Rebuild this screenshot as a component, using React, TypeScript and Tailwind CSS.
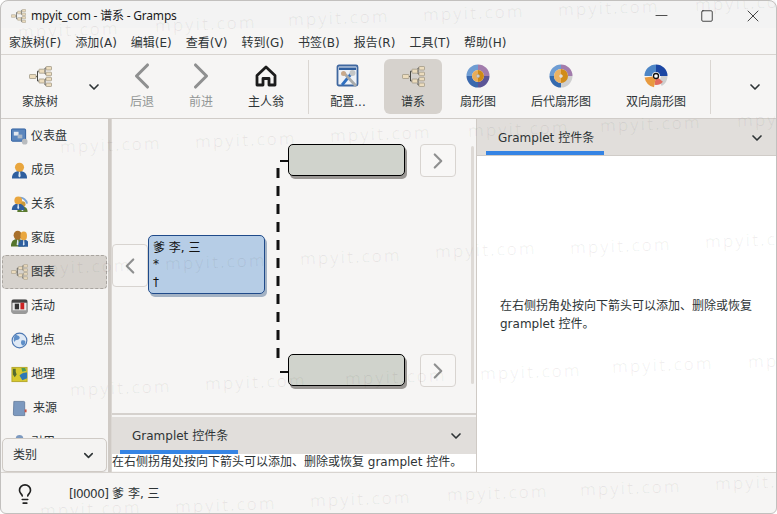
import React from "react";
import { ChevronDown, ChevronLeft, ChevronRight, Lightbulb, Minus, Square, X } from "lucide-react";

const font = "font-['DejaVu_Sans','Noto_Sans_CJK_SC',sans-serif]";

const wedge = (r0: number, r1: number, a0: number, a1: number) => {
  const p = (r: number, a: number) => {
    const t = ((a - 90) * Math.PI) / 180;
    return `${(12 + r * Math.cos(t)).toFixed(2)} ${(12 + r * Math.sin(t)).toFixed(2)}`;
  };
  const large = a1 - a0 > 180 ? 1 : 0;
  return `M${p(r0, a0)} A${r0} ${r0} 0 ${large} 1 ${p(r0, a1)} L${p(r1, a1)} A${r1} ${r1} 0 ${large} 0 ${p(r1, a0)} Z`;
};

const TreeIcon = ({ className = "w-[23px] h-[21px]" }: { className?: string }) => (
  <svg viewBox="0 0 23 21" className={className}>
    <path d="M7 10.5H8.5M8.5 5.2V15M8.5 5.2H10M8.5 15H10M15 5.2H16M16 2V8M16 2H17M16 8H17M15 15H16M16 13V19M16 13H17M16 19H17" stroke="#4a4a44" strokeWidth="1" fill="none" />
    <g fill="#ecdcbd" stroke="#a39a88" strokeWidth="0.8">
      <rect x="0.5" y="8.5" width="6.5" height="4" rx="0.6" />
      <rect x="10" y="3.2" width="5.5" height="4" rx="0.6" />
      <rect x="10" y="13" width="5.5" height="4" rx="0.6" />
      <rect x="17" y="0.5" width="5.5" height="3.5" rx="0.6" />
      <rect x="17" y="6.2" width="5.5" height="3.5" rx="0.6" />
      <rect x="17" y="11.3" width="5.5" height="3.5" rx="0.6" />
      <rect x="17" y="17" width="5.5" height="3.5" rx="0.6" />
    </g>
  </svg>
);

const HomeIcon = () => (
  <svg viewBox="0 0 24 24" className="w-[24px] h-[24px]">
    <path d="M3 11.5 12 3l9 8.500V21h-6v-6.500H9V21H3Z" fill="none" stroke="#1c1c1c" strokeWidth="2.800" strokeLinejoin="round" />
  </svg>
);

const ConfigIcon = () => (
  <svg viewBox="0 0 24 24" className="w-[24px] h-[24px]">
    <rect x="1.500" y="1.500" width="20" height="20" rx="1.500" fill="#eef2f7" stroke="#3f679f" strokeWidth="1.800" />
    <rect x="3" y="3.500" width="17" height="2.500" fill="#2f5f9f" />
    <path d="M6 21 15 10" stroke="#2f6fc0" strokeWidth="2.800" />
    <path d="M8 9 20 22" stroke="#a9abab" strokeWidth="2.800" />
    <circle cx="16.500" cy="9" r="3" fill="#c4c6c6" />
    <circle cx="7.500" cy="9.500" r="2.500" fill="#c9a98a" />
  </svg>
);

const FanIcon = () => (
  <svg viewBox="0 0 24 24" className="w-[24px] h-[24px]">
    <path d={wedge(6, 11.500, 270, 360)} fill="#6f9dd3" />
    <path d={wedge(6, 11.500, 0, 90)} fill="#a27cac" />
    <path d={wedge(6, 11.500, 90, 180)} fill="#5b5596" />
    <path d={wedge(6, 11.500, 180, 270)} fill="#3a69ae" />
    <path d={wedge(1.500, 6, 180, 360)} fill="#e9ad59" />
    <path d={wedge(1.500, 6, 0, 180)} fill="#cf8a17" />
    <circle cx="12" cy="12" r="1.500" fill="#d9d9d9" stroke="#8a8a8a" strokeWidth="0.500" />
  </svg>
);

const DescendantFanIcon = () => (
  <svg viewBox="0 0 24 24" className="w-[24px] h-[24px]">
    <path d={wedge(6, 11.500, 90, 180)} fill="#cfcfcf" />
    <path d={wedge(7, 11.500, 270, 360)} fill="#6f9dd3" />
    <path d={wedge(7, 11.500, 0, 90)} fill="#a27cac" />
    <path d={wedge(7, 11.500, 180, 270)} fill="#356aae" />
    <path d={wedge(1.500, 7, 180, 360)} fill="#ecb263" />
    <path d={wedge(1.500, 7, 0, 180)} fill="#d18c1a" />
    <circle cx="12" cy="12" r="1.500" fill="#dedede" />
  </svg>
);

const DoubleFanIcon = () => (
  <svg viewBox="0 0 24 24" className="w-[24px] h-[24px]">
    <path d={wedge(5, 11.500, 90, 150)} fill="#cfcfcf" />
    <path d={wedge(4, 11.500, 270, 360)} fill="#4e86c6" />
    <path d={wedge(4, 11.500, 0, 90)} fill="#1b46a3" />
    <path d={wedge(2, 9, 130, 190)} fill="#e26b5f" />
    <path d={wedge(3, 11.500, 190, 262)} fill="#e89a3f" />
    <circle cx="12" cy="12" r="2.500" fill="#fff" stroke="#111" strokeWidth="1.300" />
  </svg>
);

const Person = ({ x = 0, head = "#e9a63e", body = "#2f5f9f" }: { x?: number; head?: string; body?: string }) => (
  <g transform={`translate(${x} 0)`}>
    <path d="M1 17.500c0-6 3.500-8 8-8s8 2 8 8Z" fill={body} />
    <path d="M8.400 10h1.200l.6 5-1.200 1.500L7.800 15Z" fill="#dce8f4" />
    <circle cx="9" cy="5.500" r="4.800" fill={head} />
  </g>
);

const SideIcon = ({ name }: { name: string }) => {
  const cls = "w-[17px] h-[17px]";
  if (name === "dashboard")
    return (
      <svg viewBox="0 0 18 18" className={cls}>
        <rect x="0.500" y="1" width="15" height="13" rx="1" fill="#5b86bd" stroke="#2f5f9f" />
        <rect x="3" y="4" width="5" height="4" fill="#e4e9ef" />
        <rect x="7" y="7" width="5" height="4" fill="#a9b7c8" />
        <circle cx="14.500" cy="14.500" r="3" fill="#b9bcbf" />
      </svg>
    );
  if (name === "person")
    return (
      <svg viewBox="0 0 18 18" className={cls}>
        <Person />
      </svg>
    );
  if (name === "relation")
    return (
      <svg viewBox="0 0 18 18" className={cls}>
        <path d="M9 2a7 7 0 0 1 8 6" fill="none" stroke="#7fa6d4" strokeWidth="2" />
        <g transform="translate(6 5) scale(.68)">
          <Person head="#c99a3a" body="#5a7a30" />
        </g>
        <g transform="scale(.85)">
          <Person />
        </g>
      </svg>
    );
  if (name === "family")
    return (
      <svg viewBox="0 0 18 18" className={cls}>
        <g transform="translate(-1 0) scale(.9 1)">
          <Person head="#a8702c" body="#55752c" />
        </g>
        <g transform="translate(7 1) scale(.72 .95)">
          <Person />
        </g>
      </svg>
    );
  if (name === "tree") return <TreeIcon className="w-[17px] h-[16px]" />;
  if (name === "event")
    return (
      <svg viewBox="0 0 18 18" className={cls}>
        <rect x="1" y="2" width="16" height="14" rx="1.500" fill="#e8e8e8" stroke="#555" />
        <rect x="1" y="2" width="16" height="3" fill="#444" />
        <rect x="4" y="6" width="4.500" height="6" fill="#333" />
        <rect x="10" y="5" width="4" height="7" fill="#cc2222" />
        <rect x="1" y="13" width="16" height="3" fill="#9a9a9a" />
      </svg>
    );
  if (name === "place")
    return (
      <svg viewBox="0 0 18 18" className={cls}>
        <circle cx="9" cy="9" r="7.800" fill="#dfe9f5" stroke="#4f79b3" strokeWidth="1.200" />
        <path d="M5 3c3 1 5 2 4 4s-4 1-5 3-2-5 1-7ZM11 9c3-1 5 0 4 3s-3 3-4 1 0-3 0-4Z" fill="#5f8fc8" />
      </svg>
    );
  if (name === "map")
    return (
      <svg viewBox="0 0 18 18" className={cls}>
        <rect x="1" y="1.500" width="16" height="15" fill="#d8c92e" stroke="#b5a82a" />
        <path d="M9 10c3-3 6-3 8-3v6l-5 2Z" fill="#2e78b5" />
        <path d="M2 3h3v3l1 3-2 3-2-3Z" fill="#556b2f" />
        <path d="M11 2h4l1 3-4 1Z" fill="#4f9a55" />
      </svg>
    );
  if (name === "source")
    return (
      <svg viewBox="0 0 18 18" className={cls}>
        <path d="M3 1.500h10.500a1 1 0 0 1 1 1V16.500H4a1.500 1.500 0 0 1-1.500-1.500Z" fill="#7c99bf" stroke="#5a7396" strokeWidth="0.800" />
        <rect x="14.500" y="10" width="2" height="3" fill="#cc5544" />
      </svg>
    );
  return (
    <svg viewBox="0 0 18 18" className={cls}>
      <circle cx="9" cy="5" r="4" fill="#7c99bf" />
      <rect x="3" y="8" width="12" height="9" fill="#a9b7c8" />
    </svg>
  );
};

const sideItems = [
  { name: "dashboard", label: "仪表盘" },
  { name: "person", label: "成员" },
  { name: "relation", label: "关系" },
  { name: "family", label: "家庭" },
  { name: "tree", label: "图表", active: true },
  { name: "event", label: "活动" },
  { name: "place", label: "地点" },
  { name: "map", label: "地理" },
  { name: "source", label: "来源", wide: true },
  { name: "cite", label: "引用" },
];

const menus = ["家族树(F)", "添加(A)", "编辑(E)", "查看(V)", "转到(G)", "书签(B)", "报告(R)", "工具(T)", "帮助(H)"];

// watermark copies: [left, top]
const marks = [
  [18, 18], [155, 12], [288, 6], [423, 1], [558, -4], [695, -9],
  [60, 133], [195, 128], [330, 122], [468, 117], [600, 112], [737, 107],
  [30, 255], [165, 250], [300, 245], [435, 238], [570, 234], [705, 228],
  [70, 376], [205, 370], [345, 365], [480, 360], [612, 353], [748, 348],
  [40, 497], [175, 493], [310, 487], [447, 481], [580, 476], [715, 470],
];

const ToolItem = ({ w, label, icon, dim, active, ml }: { w: string; label: string; icon: React.ReactNode; dim?: boolean; active?: boolean; ml?: string }) => (
  <div className={`${w} ${ml ?? ""} h-[55px] shrink-0 flex flex-col items-center rounded-md ${active ? "bg-[#d6d2cd]" : ""}`}>
    <div className="h-[32px] mt-[1px] flex items-center justify-center">{icon}</div>
    <span className={`mt-[2px] text-[12px] leading-[16px] whitespace-nowrap ${dim ? "text-[#929595]" : "text-[#2e3436]"}`}>{label}</span>
  </div>
);

const PanelHeader = ({ className }: { className: string }) => (
  <div className={`relative flex items-center bg-[#e1dedb] ${className}`}>
    <span className="text-[12px] text-[#2e3436] leading-none">Gramplet 控件条</span>
    <ChevronDown className="absolute right-[12px] top-[11px] w-[16px] h-[16px] text-[#2e3436]" strokeWidth={2.500} />
    <div className="absolute bottom-0 h-[4px] w-[118px] left-[var(--tab)] bg-[#3584e4]" />
  </div>
);

const NavButton = ({ dir, className }: { dir: "l" | "r"; className: string }) => (
  <div className={`absolute flex items-center justify-center rounded-[4px] border border-[#d8d4d0] bg-[#f8f7f6] ${className}`}>
    {dir === "l" ? (
      <ChevronLeft className="w-[26px] h-[26px] text-[#8f9090]" strokeWidth={2} />
    ) : (
      <ChevronRight className="w-[26px] h-[26px] text-[#8f9090]" strokeWidth={2} />
    )}
  </div>
);

const App = () => {
  return (
    <div className={`${font} relative w-[777px] h-[514px] overflow-hidden bg-white text-[#2e3436]`}>
      <div className="w-full h-full flex flex-col rounded-t-[8px] rounded-b-[6px] overflow-hidden bg-[#f6f5f4]">
        {/* title bar */}
        <div className="h-[28px] shrink-0 flex items-center bg-[#f3f3f3] pl-[11px] pt-[3px]">
          <TreeIcon className="w-[15px] h-[14px]" />
          <span className="ml-[5px] mt-[1px] font-['Noto_Sans','Noto_Sans_CJK_SC',sans-serif] text-[12px] tracking-[-0.2px] text-[#1c1c1c] whitespace-nowrap">mpyit_com - 谱系 - Gramps</span>
          <div className="ml-auto flex items-center pr-[1px]">
            <div className="w-[46px] flex justify-center"><Minus className="w-[19px] h-[19px] text-[#222]" strokeWidth={1} /></div>
            <div className="w-[46px] flex justify-center"><Square className="w-[14px] h-[14px] text-[#222]" strokeWidth={1.400} /></div>
            <div className="w-[46px] flex justify-center"><X className="w-[20px] h-[20px] text-[#222]" strokeWidth={1} /></div>
          </div>
        </div>
        {/* menu */}
        <div className="h-[27px] shrink-0 flex items-center gap-[14px] px-[9px] pt-[3px] border-b border-[#d8d4d0] text-[12px]">
          {menus.map((m) => (
            <span key={m} className="whitespace-nowrap">{m}</span>
          ))}
        </div>
        {/* toolbar */}
        <div className="h-[64px] shrink-0 flex items-center pl-[6px] border-b border-[#d0ccc8]">
          <ToolItem w="w-[68px]" label="家族树" icon={<TreeIcon />} />
          <div className="w-[40px] shrink-0 flex justify-center"><ChevronDown className="w-[16px] h-[16px]" strokeWidth={2.500} /></div>
          <ToolItem w="w-[56px]" dim label="后退" icon={<ChevronLeft className="w-[44px] h-[44px] text-[#8f9090]" strokeWidth={1.700} />} />
          <ToolItem w="w-[62px]" dim label="前进" icon={<ChevronRight className="w-[44px] h-[44px] text-[#8f9090]" strokeWidth={1.700} />} />
          <ToolItem w="w-[68px]" label="主人翁" icon={<HomeIcon />} />
          <div className="ml-[8px] w-px h-[54px] shrink-0 bg-[#dad6d2]" />
          <ToolItem w="w-[58px]" ml="ml-[10px]" label="配置..." icon={<ConfigIcon />} />
          <ToolItem w="w-[58px]" ml="ml-[7px]" active label="谱系" icon={<TreeIcon />} />
          <ToolItem w="w-[64px]" ml="ml-[4px]" label="扇形图" icon={<FanIcon />} />
          <ToolItem w="w-[102px]" label="后代扇形图" icon={<DescendantFanIcon />} />
          <ToolItem w="w-[88px]" label="双向扇形图" icon={<DoubleFanIcon />} />
          <div className="ml-[10px] w-px h-[54px] shrink-0 bg-[#dad6d2]" />
          <div className="ml-[24px] w-[40px] shrink-0 flex justify-center"><ChevronDown className="w-[16px] h-[16px]" strokeWidth={2.500} /></div>
        </div>
        {/* main */}
        <div className="flex-1 min-h-0 flex">
          <div className="w-[108px] shrink-0 flex flex-col">
            <div className="h-[319px] overflow-hidden">
              {sideItems.map((s) => (
                <div key={s.name} className={`h-[34px] ml-[2px] mr-[1px] flex items-center text-[12px] rounded-[4px] ${s.active ? "pl-[8px] bg-[#d6d2cd] border border-dashed border-[#a9a5a0]" : "pl-[9px]"}`}>
                  <div className="w-[17px] shrink-0 flex justify-center"><SideIcon name={s.name} /></div>
                  <span className={s.wide ? "ml-[5px]" : "ml-[3px]"}>{s.label}</span>
                </div>
              ))}
            </div>
            <div className="h-[34px] ml-[2px] mr-[1px] flex items-center justify-between pl-[10px] pr-[10px] rounded-[5px] border border-[#cfcac5] bg-[#f4f3f2] shadow-[0_1px_1px_rgba(0,0,0,0.08)] text-[12px]">
              <span>类别</span>
              <ChevronDown className="w-[15px] h-[15px]" strokeWidth={2.500} />
            </div>
          </div>
          <div className="w-[3px] shrink-0 bg-[#cfcac5]" />
          {/* chart column */}
          <div className="w-[365px] shrink-0 flex flex-col border-l border-[#dbd7d3]">
            <div className="relative h-[296px] shrink-0 overflow-hidden border-b-[2px] border-[#d5d1cd]">
              <svg className="absolute left-[160px] top-[35px]" width="20" height="225" viewBox="0 0 20 225">
                <path d="M6 14V211" stroke="#111" strokeWidth="3" strokeDasharray="10 8" fill="none" />
                <path d="M8 7H16M8 218H16" stroke="#111" strokeWidth="2" fill="none" />
              </svg>
              <div className="absolute left-[176px] top-[25px] w-[117px] h-[32px] rounded-[5px] border-[1.500px] border-black bg-[#d0d3cc] shadow-[2px_3px_0_#9a9794]" />
              <NavButton dir="r" className="left-[308px] top-[25px] w-[36px] h-[33px]" />
              <div className="absolute left-[36px] top-[116px] w-[117px] h-[59px] rounded-[5px] border-[1.500px] border-[#1f4a8a] bg-[#b6cde6] shadow-[2px_3px_0_#a3b2c4] pl-[4px] pt-[3px] text-[12px] text-[#111]">
                <div className="h-[17px] leading-[19px]">爹 李, 三</div>
                <div className="h-[18px] leading-[17px]">*</div>
                <div className="h-[17px] leading-[17px]">†</div>
              </div>
              <NavButton dir="l" className="left-0 top-[125px] w-[36px] h-[43px]" />
              <div className="absolute left-[176px] top-[235px] w-[117px] h-[32px] rounded-[5px] border-[1.500px] border-black bg-[#d0d3cc] shadow-[2px_3px_0_#9a9794]" />
              <NavButton dir="r" className="left-[308px] top-[235px] w-[36px] h-[33px]" />
              <div className="absolute right-[2px] top-[27px] w-[3px] h-[238px] rounded-full bg-[#dedad6]" />
            </div>
            <div className="h-[2px] shrink-0" />
            <PanelHeader className="h-[37px] pl-[20px] shrink-0 [--tab:8px]" />
            <div className="h-[17px] shrink-0 bg-white text-[12px] leading-[17px] whitespace-nowrap overflow-hidden">
              在右侧拐角处按向下箭头可以添加、删除或恢复 gramplet 控件。
            </div>
          </div>
          {/* right column */}
          <div className="flex-1 flex flex-col border-l border-[#cfcac5]">
            <PanelHeader className="h-[37px] pl-[21px] pt-[2px] shrink-0 border-b border-[#d0ccc8] [--tab:9px]" />
            <div className="flex-1 bg-white pl-[23px] pr-[10px] pt-[141px] text-[12px] leading-[18px]">
              在右侧拐角处按向下箭头可以添加、删除或恢复 gramplet 控件。
            </div>
          </div>
        </div>
        {/* status bar */}
        <div className="h-[42px] shrink-0 flex items-center border-t border-[#d8d4d0] pl-[14px]">
          <Lightbulb className="w-[22px] h-[22px] text-[#222]" strokeWidth={1.800} />
          <span className="ml-[33px] text-[12px] whitespace-nowrap"><span className="tracking-[-0.6px]">[I0000]</span> 爹 李, 三</span>
        </div>
      </div>
      {/* watermark */}
      <div className="absolute inset-0 pointer-events-none overflow-hidden">
        {marks.map(([x, y]) => (
          <span
            key={`${x}-${y}`}
            className="absolute font-['Open_Sans',sans-serif] text-[17px] leading-[24px] tracking-[2px] text-black/[0.06] -rotate-2 whitespace-nowrap"
            style={{ left: x, top: y }}
          >
            mpyit.com
          </span>
        ))}
      </div>
      <div className="absolute inset-0 pointer-events-none rounded-t-[8px] rounded-b-[6px] border border-[#c2c0be]" />
    </div>
  );
};

export default App;
